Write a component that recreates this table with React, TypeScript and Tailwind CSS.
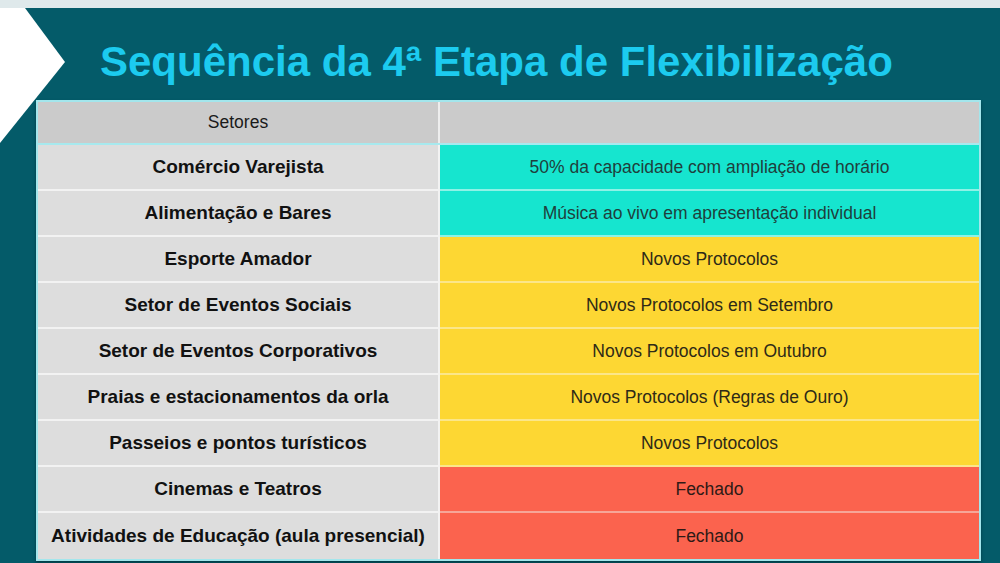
import React from "react";

type Row = { setor: string; status: string; tone: "cyan" | "yellow" | "red" };

const rows: Row[] = [
  { setor: "Comércio Varejista", status: "50% da capacidade com ampliação de horário", tone: "cyan" },
  { setor: "Alimentação e Bares", status: "Música ao vivo em apresentação individual", tone: "cyan" },
  { setor: "Esporte Amador", status: "Novos Protocolos", tone: "yellow" },
  { setor: "Setor de Eventos Sociais", status: "Novos Protocolos em Setembro", tone: "yellow" },
  { setor: "Setor de Eventos Corporativos", status: "Novos Protocolos em Outubro", tone: "yellow" },
  { setor: "Praias e estacionamentos da orla", status: "Novos Protocolos (Regras de Ouro)", tone: "yellow" },
  { setor: "Passeios e pontos turísticos", status: "Novos Protocolos", tone: "yellow" },
  { setor: "Cinemas e Teatros", status: "Fechado", tone: "red" },
  { setor: "Atividades de Educação (aula presencial)", status: "Fechado", tone: "red" },
];

const toneClass: Record<Row["tone"], string> = {
  cyan: "bg-[#16e5cf] text-[#1f3f3c] border-[#8ef2e6]",
  yellow: "bg-[#fdd733] text-[#2e2a17] border-[#fbe68a]",
  red: "bg-[#fb634e] text-[#2e1a16] border-[#f6a698]",
};

export default function App() {
  return (
    <div
      className="relative w-[1000px] h-[563px] overflow-hidden bg-[#045b69] flex flex-col"
      style={{ fontFamily: '"Liberation Sans", Arial, Helvetica, sans-serif' }}
    >
      <div className="h-[8px] w-full bg-[#dfe9eb] shrink-0" />
      <svg className="absolute left-0 top-[8px]" width="70" height="140" viewBox="0 0 70 140">
        <polygon points="0,0 25,0 65,54 0,135" fill="#ffffff" />
      </svg>
      <h1 className="pl-[100px] pt-[33px] text-[42px] leading-[42px] font-bold text-[#1ccbef] tracking-[0px]">
        Sequência da 4ª Etapa de Flexibilização
      </h1>
      <div className="ml-[36px] mt-[17px] w-[945px] shrink-0 border-2 border-[#a3e6ec] shadow-[0_2px_3px_rgba(0,0,0,0.35)]">
        <div className="grid grid-cols-[402px_1fr] h-[43px] bg-[#cbcbcb] border-b-2 border-[#a7e9ee]">
          <div className="flex items-center justify-center border-r-2 border-[#eeeeee] text-[17.5px] text-[#1a1a1a]">
            Setores
          </div>
          <div />
        </div>
        {rows.map((r, i) => (
          <div key={i} className="grid grid-cols-[402px_1fr] h-[46px]">
            <div
              className={`flex items-center justify-center bg-[#dddddd] border-r-2 border-[#f2f2f2] text-[19px] font-bold text-[#111111] ${
                i < rows.length - 1 ? "border-b-2" : ""
              }`}
            >
              {r.setor}
            </div>
            <div
              className={`flex items-center justify-center text-[17.5px] ${toneClass[r.tone]} ${
                i < rows.length - 1 ? "border-b-2" : ""
              }`}
            >
              {r.status}
            </div>
          </div>
        ))}
      </div>
    </div>
  );
}
